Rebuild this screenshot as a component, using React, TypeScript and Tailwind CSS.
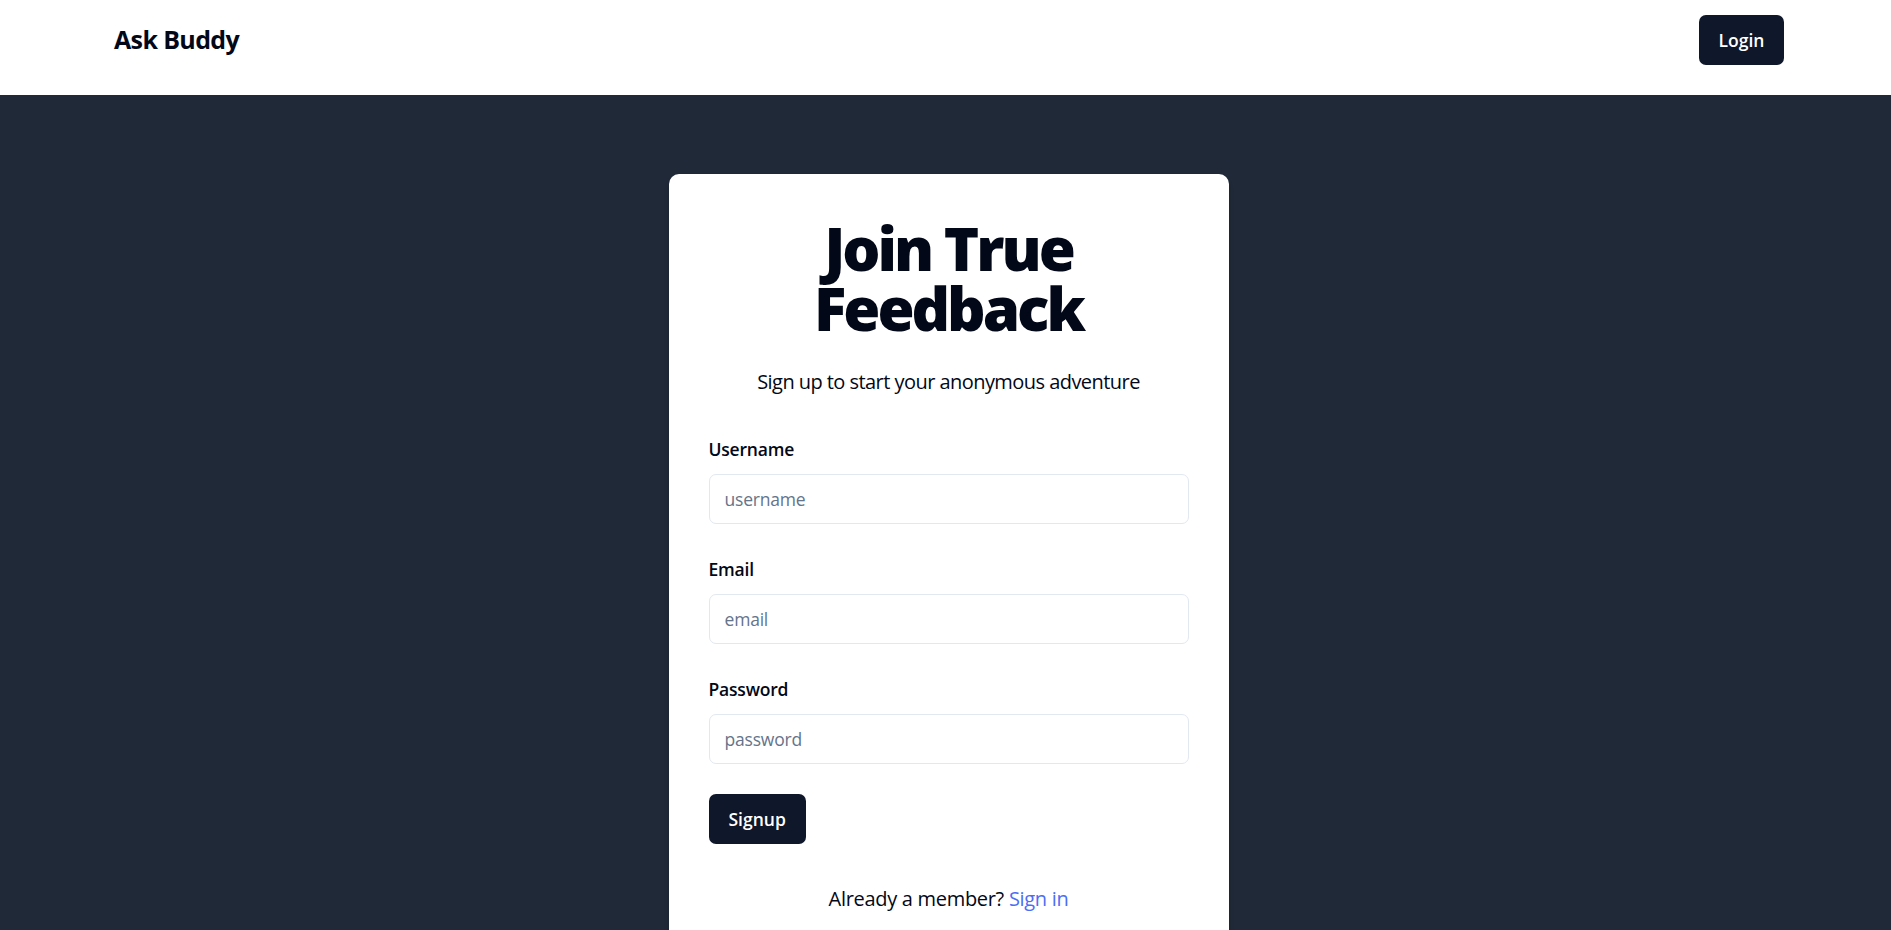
const Field = ({ label, placeholder, type = 'text', first = false }: { label: string; placeholder: string; type?: string; first?: boolean }) => (
  <div className={first ? '' : 'mt-[33px]'}>
    <label className="block text-[17.5px] leading-[25px] font-semibold tracking-[-0.2px] text-[#020817]">{label}</label>
    <input
      type={type}
      placeholder={placeholder}
      className="mt-[12px] block w-full h-[50px] rounded-[7px] border border-[#e2e8f0] bg-white px-[15px] text-[17.5px] tracking-[-0.2px] text-[#020817] placeholder:text-[#64748b] outline-none"
    />
  </div>
);

export default function App() {
  return (
    <div className="min-h-screen bg-[#1f2937] font-['Open_Sans',sans-serif]">
      {/* Navbar */}
      <nav className="h-[95px] bg-white pl-[114px] pr-[107px] pt-[15px]">
        <div className="flex h-[50px] items-center justify-between">
          <a className="text-[25px] font-bold text-[#020817] tracking-tight">Ask Buddy</a>
          <button className="h-[50px] w-[85px] rounded-[7px] bg-[#0f172a] text-[17.5px] font-semibold text-white">
            Login
          </button>
        </div>
      </nav>

      {/* Signup card */}
      <div className="flex justify-center pl-[6px] pt-[79px] pb-[79px]">
        <div className="w-[560px] rounded-[10px] bg-white p-[40px] shadow-md">
          <div className="text-center">
            <h1 className="mt-[4px] mb-[28.5px] text-[60px] leading-[60px] font-extrabold tracking-[-0.05em] text-[#020817]">
              Join True Feedback
            </h1>
            <p className="text-[20px] leading-[30px] tracking-[-0.55px] text-[#020817]">
              Sign up to start your anonymous adventure
            </p>
          </div>

          <form className="mt-[40.5px]" onSubmit={(e) => e.preventDefault()}>
            <Field first label="Username" placeholder="username" />
            <Field label="Email" placeholder="email" />
            <Field label="Password" placeholder="password" type="password" />
            <button
              type="submit"
              className="mt-[30px] h-[50px] rounded-[7px] bg-[#0f172a] px-[20px] text-[17.5px] font-semibold text-white"
            >
              Signup
            </button>
          </form>

          <p className="mt-[40px] text-center text-[20px] leading-[30px] tracking-[-0.3px] text-[#020817]">
            Already a member?{' '}
            <a className="text-[#4c6ef5]">Sign in</a>
          </p>
        </div>
      </div>
    </div>
  );
}
